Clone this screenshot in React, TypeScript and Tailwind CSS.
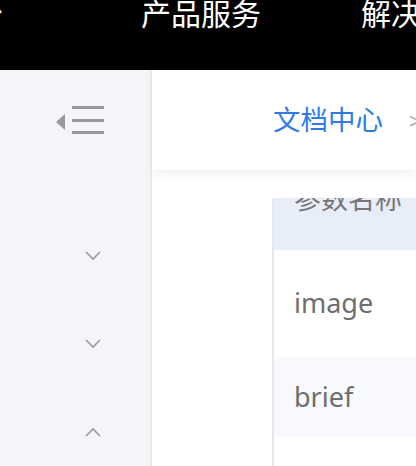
const font = { fontFamily: '"Noto Sans", "Noto Sans CJK SC", sans-serif' };

function Chevron({ up = false }: { up?: boolean }) {
  return (
    <svg width="18" height="12" viewBox="0 0 18 12" className="text-[#9a9a9a]">
      <path
        d={up ? "M2 10 L9 3 L16 10" : "M2 2 L9 9 L16 2"}
        fill="none"
        stroke="currentColor"
        strokeWidth="1.6"
      />
    </svg>
  );
}

function CollapseIcon() {
  return (
    <svg width="50" height="30" viewBox="0 0 50 30" className="text-[#999]">
      <polygon points="0,16 9,8 9,24" fill="currentColor" />
      <rect x="16" y="0" width="32" height="3" fill="currentColor" />
      <rect x="16" y="13" width="32" height="3" fill="currentColor" />
      <rect x="16" y="25" width="32" height="3" fill="currentColor" />
    </svg>
  );
}

export default function App() {
  return (
    <div className="relative h-[466px] w-[416px] overflow-hidden bg-white" style={font}>
      {/* top nav */}
      <div className="flow-root h-[70px] overflow-hidden bg-black text-white">
        <div className="-mt-[1px] flex whitespace-nowrap text-[30px] leading-[30px]">
          <span className="-ml-[56px] w-[197px] shrink-0">平台</span>
          <span className="w-[220px] shrink-0">产品服务</span>
          <span className="shrink-0">解决方案</span>
        </div>
      </div>

      <div className="flex h-[396px]">
        {/* sidebar */}
        <div className="flex w-[152px] shrink-0 flex-col border-r-2 border-[#e9e9ee] bg-[#f4f5f9]">
          <div className="flex h-[100px] items-center pl-[56px] pt-[2px]">
            <CollapseIcon />
          </div>
          <div className="mt-[80px] flex flex-col items-end gap-[76px] pr-[48px]">
            <Chevron />
            <Chevron />
            <Chevron up />
          </div>
        </div>

        {/* main */}
        <div className="flex min-w-0 flex-1 flex-col">
          <div className="relative z-10 flex h-[100px] shrink-0 items-center bg-white pl-[121px] shadow-[0_4px_10px_rgba(0,0,0,0.06)]">
            <span className="whitespace-nowrap text-[27.5px] text-[#2f7be6]">文档中心</span>
            <span className="ml-[26px] text-[22px] text-[#aaa]">&gt;</span>
          </div>
          <div className="mt-[28px] ml-[120px] flex-1 overflow-hidden border-l-2 border-[#e6e6ec]">
            <div className="flex h-[52px] items-start bg-[#e8eef8] pl-[20px]">
              <span className="-mt-[19px] whitespace-nowrap text-[27px] text-[#777]">参数名称</span>
            </div>
            <div className="flex h-[107px] items-center bg-white pl-[20px] text-[27px] text-[#6e6e6e]">
              image
            </div>
            <div className="flex h-[80px] items-center bg-[#f7f9fd] pl-[20px] text-[27px] text-[#6e6e6e]">
              brief
            </div>
            <div className="h-[40px] bg-white" />
          </div>
        </div>
      </div>
    </div>
  );
}
